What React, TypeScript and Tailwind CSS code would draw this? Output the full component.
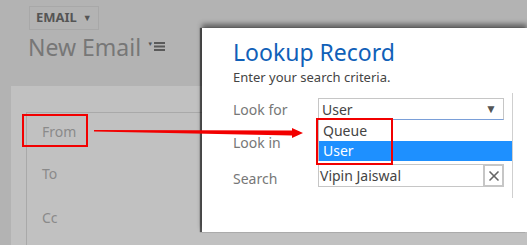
import { X } from "lucide-react";

function Arrow() {
  return (
    <svg className="absolute left-0 top-0 pointer-events-none" width="527" height="245">
      <polygon points="94,130 292,130.5 292,128 303,133 292,138 292,135.5 94,131.5" fill="#f20000" />
    </svg>
  );
}

export default function App() {
  return (
    <div
      className="relative w-[527px] h-[245px] overflow-hidden bg-[#b3b3b3]"
      style={{ fontFamily: '"Noto Sans", "Open Sans", sans-serif' }}
    >
      {/* background page */}
      <div className="flex flex-col h-full">
        <div className="pl-[29px] pt-[4px] h-[86px]">
          <div className="inline-flex items-center gap-[6px] h-[24px] px-[6px] border border-[#a8a8a8] text-[13px] font-bold text-[#555]">
            EMAIL
            <span className="text-[9px] leading-none">▼</span>
          </div>
          <div className="flex items-center gap-[6px] mt-[1px] -ml-[1px]">
            <span className="text-[23px] leading-[32px] text-[#777]">New Email</span>
            <span className="flex items-center gap-[1px] text-[#555]">
              <span className="text-[6px] leading-none -mt-[6px]">▼</span>
              <svg width="11" height="9" viewBox="0 0 11 9">
                <rect x="0" y="0" width="11" height="2" fill="#5a5a5a" />
                <rect x="0" y="3.5" width="11" height="2" fill="#5a5a5a" />
                <rect x="0" y="7" width="11" height="2" fill="#5a5a5a" />
              </svg>
            </span>
          </div>
        </div>
        <div className="flex-1 ml-[11px] bg-[#c1c1c1] pl-[15px] pt-[26px]">
          <div className="h-full border-l border-t border-[#a9a9a9] pl-[15px] text-[14px] text-[#8a8a8a]">
            <div className="h-[42px] pt-[8px]">From</div>
            <div className="h-[44px] pt-[8px]">To</div>
            <div className="h-[43px] pt-[8px]">Cc</div>
          </div>
        </div>
      </div>

      {/* lookup dialog */}
      <div className="absolute left-[202px] top-[28px] w-[325px] h-[204px] bg-white shadow-[0_-4px_5px_rgba(0,0,0,0.45),-2px_0_1px_rgba(0,0,0,0.55)]">
        <div className="pl-[31px] pt-[9px] pr-[14px]">
          <h1 className="text-[23px] leading-[31px] text-[#1060b8]">Lookup Record</h1>
          <p className="text-[13px] leading-[18px] text-[#444]">Enter your search criteria.</p>

          <div className="relative mt-[12px] flex">
            <div className="flex-1 pr-[8px] text-[14px] text-[#777]">
              <div className="flex items-center h-[22px]">
                <span className="w-[85px]">Look for</span>
                <div className="flex-1 h-[22px] flex items-center justify-between px-[3px] border border-[#c6c6c6] border-b-[#7a9fd8] text-[#444]">
                  User
                  <span className="text-[12px] text-[#555] pr-[3px]">▼</span>
                </div>
              </div>
              <div className="flex items-center h-[22px] mt-[11px]">
                <span className="w-[85px]">Look in</span>
                <div className="flex-1 h-[22px] border-r border-[#c6c6c6]" />
              </div>
              <div className="flex items-center h-[23px] mt-[11px]">
                <span className="w-[85px] pt-[6px]">Search</span>
                <div className="flex-1 h-[23px] flex border border-[#c6c6c6] text-[#444]">
                  <span className="flex-1 pl-[1px] leading-[21px]">Vipin Jaiswal</span>
                  <span className="w-[21px] flex items-center justify-center border-2 border-[#c6c6c6] -m-[1px]">
                    <X size={16} strokeWidth={2.5} color="#666" />
                  </span>
                </div>
              </div>
            </div>
            <div className="w-px h-[105px] -mt-[5px] bg-[#cfcfcf]" />

            {/* open dropdown */}
            <div className="absolute left-[85px] top-[22px] w-[194px] bg-white border-l border-[#bdbdbd] text-[14px]">
              <div className="h-[21px] pl-[4px] leading-[21px] text-[#444]">Queue</div>
              <div className="h-[20px] pl-[4px] leading-[20px] bg-[#1e90ff] text-white">User</div>
            </div>
          </div>
        </div>
      </div>

      {/* annotations */}
      <div className="absolute left-[22px] top-[114px] w-[66px] h-[33px] border-2 border-[#f20000]" />
      <div className="absolute left-[316px] top-[118px] w-[77px] h-[47px] border-2 border-[#f20000]" />
      <Arrow />
    </div>
  );
}
